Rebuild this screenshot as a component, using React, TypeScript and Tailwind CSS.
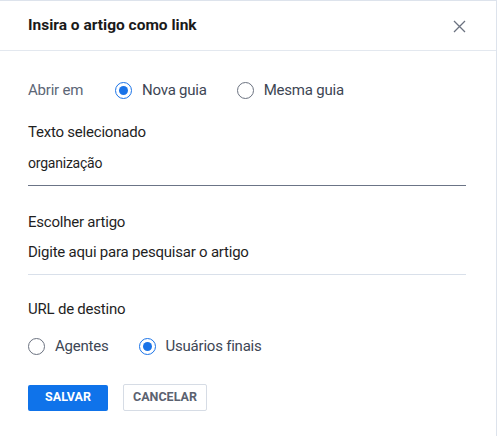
import React from "react";

function Radio({ checked }: { checked: boolean }) {
  return checked ? (
    <span className="w-[17px] h-[17px] rounded-full border-[1.5px] border-[#1a73e8] flex items-center justify-center shrink-0">
      <span className="w-[9px] h-[9px] rounded-full bg-[#1a73e8]" />
    </span>
  ) : (
    <span className="w-[17px] h-[17px] rounded-full border-[1.5px] border-[#6b7280] shrink-0" />
  );
}

export default function App() {
  return (
    <div
      className="w-[497px] h-[436px] bg-white border-t border-r border-[#dde3ec] flex flex-col"
      style={{ fontFamily: "Roboto, 'Liberation Sans', sans-serif" }}
    >
      <div className="h-[50px] border-b border-[#e3e8ef] flex items-center justify-between pl-[28px] pr-[30px] shrink-0">
        <div className="text-[15.5px] font-bold text-[#1a1a1a] mt-[1px]">Insira o artigo como link</div>
        <svg width="13" height="13" viewBox="0 0 13 13" className="text-[#6b7280] mt-[1px]">
          <path d="M1 1L12 12M12 1L1 12" stroke="currentColor" strokeWidth="1.3" />
        </svg>
      </div>
      <div className="px-[28px] pr-[30px] flex flex-col tracking-[-0.22px]">
        <div className="flex items-center mt-[28px] h-[22px] text-[15px]">
          <span className="text-[#5c6676] w-[87px]">Abrir em</span>
          <span className="flex items-center gap-[10px] text-[#3d4654]">
            <Radio checked />
            Nova guia
          </span>
          <span className="flex items-center gap-[10px] text-[#3d4654] ml-[30px]">
            <Radio checked={false} />
            Mesma guia
          </span>
        </div>
        <div className="text-[15px] text-[#1f1f1f] mt-[20px] leading-[22px]">Texto selecionado</div>
        <div className="text-[14px] text-[#1f1f1f] mt-[10px] leading-[20px]">organização</div>
        <div className="h-px bg-[#6b7486] mt-[12px]" />
        <div className="text-[15px] text-[#1f1f1f] mt-[25px] leading-[22px]">Escolher artigo</div>
        <div className="text-[15px] text-[#1f1f1f] mt-[8px] leading-[22px]">Digite aqui para pesquisar o artigo</div>
        <div className="h-px bg-[#d9e0ea] mt-[11px]" />
        <div className="text-[15px] text-[#1f1f1f] mt-[23px] leading-[22px]">URL de destino</div>
        <div className="flex items-center mt-[15px] h-[22px] text-[15px] text-[#3d4654]">
          <span className="flex items-center gap-[10px]">
            <Radio checked={false} />
            Agentes
          </span>
          <span className="flex items-center gap-[10px] ml-[30px]">
            <Radio checked />
            Usuários finais
          </span>
        </div>
        <div className="flex items-center mt-[27px] gap-[15px] tracking-normal">
          <button className="w-[80px] h-[26px] bg-[#0f73ea] rounded-[2px] text-white text-[12.5px] font-bold">
            SALVAR
          </button>
          <button className="w-[84px] h-[27px] border border-[#d6dce5] rounded-[2px] text-[#5b6270] text-[12.5px] font-bold bg-white">
            CANCELAR
          </button>
        </div>
      </div>
    </div>
  );
}
